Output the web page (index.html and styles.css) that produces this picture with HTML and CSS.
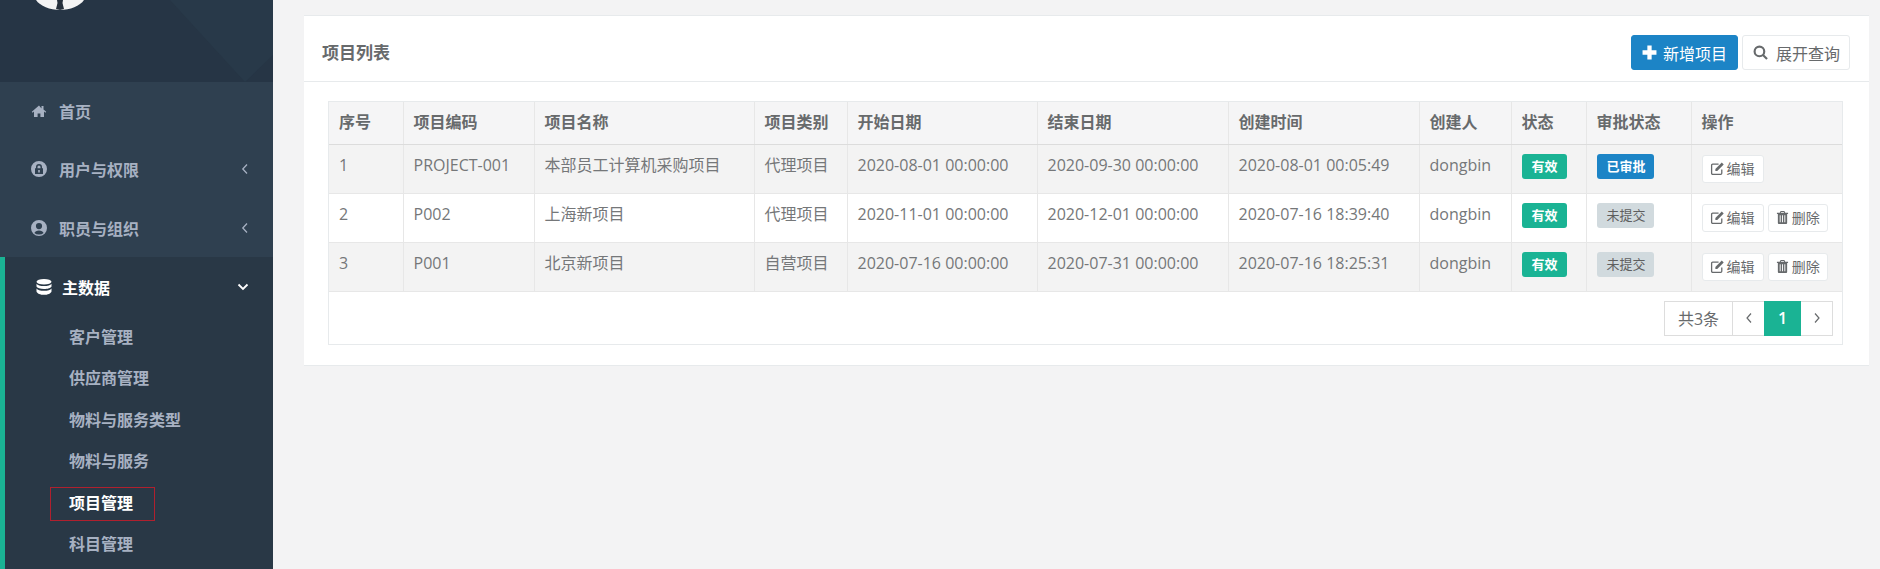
FILE: index.html
```html
<!DOCTYPE html>
<html lang="zh-CN">
<head>
    <meta charset="UTF-8" />
    <title>项目管理</title>
    <link rel="stylesheet" href="styles.css">
</head>
<body>
    <aside class="sidebar">
        <div class="side-top">
            <svg class="side-pattern" viewBox="0 0 273 82" width="273" height="82">
                <polygon points="170,0 273,0 273,55 245,82" fill="#283949"/>
            </svg>
            <svg class="avatar" viewBox="0 0 48 10" width="48" height="10">
                <path d="M0 0H48C44 6 34 10 24 10S4 6 0 0Z" fill="#f4f4f4"/>
                <path d="M21 0H27L26.5 3 28 9 24 10 20 9 21.5 3Z" fill="#26303c"/>
            </svg>
        </div>
        <ul class="menu">
            <li class="menu-item">
                <svg class="menu-icon" viewBox="0 0 16 16"><path d="M8 2.500 .8 8.800l.8.900L3 8.500V14h3.600v-3.600h2.800V14H13V8.500l1.400 1.200.8-.9-2.700-2.400V3h-2v2.600Z"/></svg>
                <span>首页</span>
            </li>
            <li class="menu-item">
                <svg class="menu-icon" viewBox="0 0 16 16"><path fill-rule="evenodd" d="M8 0a8 8 0 1 1 0 16A8 8 0 0 1 8 0Zm0 3a3 3 0 0 0-3 3v1.200H4V13h8V7.200h-1V6a3 3 0 0 0-3-3Zm0 1.500A1.500 1.500 0 0 1 9.500 6v1.200h-3V6A1.500 1.500 0 0 1 8 4.500ZM7.200 9h1.600v2.500H7.200Z"/></svg>
                <span>用户与权限</span>
                <svg class="menu-arrow" viewBox="0 0 8 12"><path d="M6 1.500 1.800 6 6 10.500"/></svg>
            </li>
            <li class="menu-item">
                <svg class="menu-icon" viewBox="0 0 16 16"><path fill-rule="evenodd" d="M8 0a8 8 0 1 1 0 16A8 8 0 0 1 8 0Zm0 3a3 3 0 1 0 0 6.200A3 3 0 0 0 8 3Zm0 7.500c-2.300 0-4 1-4.600 2.400A6.300 6.300 0 0 0 8 14.500a6.300 6.300 0 0 0 4.600-1.600C12 11.500 10.300 10.500 8 10.500Z"/></svg>
                <span>职员与组织</span>
                <svg class="menu-arrow" viewBox="0 0 8 12"><path d="M6 1.500 1.800 6 6 10.500"/></svg>
            </li>
            <li class="menu-group">
                <div class="group-title">
                    <svg class="menu-icon" viewBox="0 0 16 16"><ellipse cx="8" cy="2.800" rx="7.500" ry="2.800"/><path d="M.5 4.800c1 1.600 3.800 2.300 7.500 2.300s6.500-.7 7.500-2.300v2.800c-.6 1.600-3.800 2.500-7.500 2.500S1.100 9.200.5 7.600Z"/><path d="M.5 9.400c1 1.600 3.800 2.300 7.500 2.300s6.500-.7 7.500-2.300v3c-.6 2-3.800 3.400-7.500 3.400S1.100 14.400.5 12.400Z"/></svg>
                    <span>主数据</span>
                    <svg class="group-arrow" viewBox="0 0 12 8"><path d="M1.500 1.500 6 6l4.500-4.500"/></svg>
                </div>
                <ul class="sub-menu">
                    <li>客户管理</li>
                    <li>供应商管理</li>
                    <li>物料与服务类型</li>
                    <li>物料与服务</li>
                    <li class="active">项目管理</li>
                    <li>科目管理</li>
                </ul>
            </li>
        </ul>
    </aside>

    <main class="main">
        <section class="card">
            <div class="card-head">
                <h5>项目列表</h5>
                <div class="head-tools">
                    <button class="btn btn-primary">
                        <svg class="btn-icon" viewBox="0 0 14 14"><path d="M5 .5h4v4.500h4.500v4H9v4.500H5V9H.5V5H5Z"/></svg>新增项目
                    </button>
                    <button class="btn btn-white">
                        <svg class="btn-icon search-icon" viewBox="0 0 14 14"><circle cx="6" cy="6" r="4.500"/><path d="m9.300 9.300 3.800 3.800"/></svg>展开查询
                    </button>
                </div>
            </div>
            <div class="card-body">
                <div class="table-wrap">
                    <table class="grid">
                        <colgroup>
                            <col class="c1"><col class="c2"><col class="c3"><col class="c4"><col class="c5"><col class="c6"><col class="c7"><col class="c8"><col class="c9"><col class="c10"><col class="c11">
                        </colgroup>
                        <thead>
                            <tr>
                                <th>序号</th><th>项目编码</th><th>项目名称</th><th>项目类别</th><th>开始日期</th><th>结束日期</th><th>创建时间</th><th>创建人</th><th>状态</th><th>审批状态</th><th>操作</th>
                            </tr>
                        </thead>
                        <tbody>
                            <tr>
                                <td>1</td><td>PROJECT-001</td><td>本部员工计算机采购项目</td><td>代理项目</td><td>2020-08-01 00:00:00</td><td>2020-09-30 00:00:00</td><td>2020-08-01 00:05:49</td><td>dongbin</td>
                                <td><span class="label label-green">有效</span></td>
                                <td><span class="label label-blue">已审批</span></td>
                                <td>
                                    <button class="btn-xs"><svg class="xs-icon edit-icon" viewBox="0 0 14 14"><path class="edit-box" d="M11 8v3.500a1 1 0 0 1-1 1H2.500a1 1 0 0 1-1-1V4a1 1 0 0 1 1-1H8"/><path d="M5 7.500 11 1.500l1.800 1.800-6 6H5Z"/></svg>编辑</button>
                                </td>
                            </tr>
                            <tr>
                                <td>2</td><td>P002</td><td>上海新项目</td><td>代理项目</td><td>2020-11-01 00:00:00</td><td>2020-12-01 00:00:00</td><td>2020-07-16 18:39:40</td><td>dongbin</td>
                                <td><span class="label label-green">有效</span></td>
                                <td><span class="label label-gray">未提交</span></td>
                                <td>
                                    <button class="btn-xs"><svg class="xs-icon edit-icon" viewBox="0 0 14 14"><path class="edit-box" d="M11 8v3.500a1 1 0 0 1-1 1H2.500a1 1 0 0 1-1-1V4a1 1 0 0 1 1-1H8"/><path d="M5 7.500 11 1.500l1.800 1.800-6 6H5Z"/></svg>编辑</button>
                                    <button class="btn-xs"><svg class="xs-icon" viewBox="0 0 14 14"><path fill-rule="evenodd" d="M5 0h4l1 2h3v1.200h-1V13a1 1 0 0 1-1 1H3a1 1 0 0 1-1-1V3.200H1V2h3Zm.600 1-.4 1h3.600l-.4-1ZM4 4.500V12h1V4.500Zm2.500 0V12h1V4.500Zm2.500 0V12h1V4.500Z"/></svg>删除</button>
                                </td>
                            </tr>
                            <tr>
                                <td>3</td><td>P001</td><td>北京新项目</td><td>自营项目</td><td>2020-07-16 00:00:00</td><td>2020-07-31 00:00:00</td><td>2020-07-16 18:25:31</td><td>dongbin</td>
                                <td><span class="label label-green">有效</span></td>
                                <td><span class="label label-gray">未提交</span></td>
                                <td>
                                    <button class="btn-xs"><svg class="xs-icon edit-icon" viewBox="0 0 14 14"><path class="edit-box" d="M11 8v3.500a1 1 0 0 1-1 1H2.500a1 1 0 0 1-1-1V4a1 1 0 0 1 1-1H8"/><path d="M5 7.500 11 1.500l1.800 1.800-6 6H5Z"/></svg>编辑</button>
                                    <button class="btn-xs"><svg class="xs-icon" viewBox="0 0 14 14"><path fill-rule="evenodd" d="M5 0h4l1 2h3v1.200h-1V13a1 1 0 0 1-1 1H3a1 1 0 0 1-1-1V3.200H1V2h3Zm.600 1-.4 1h3.600l-.4-1ZM4 4.500V12h1V4.500Zm2.500 0V12h1V4.500Zm2.500 0V12h1V4.500Z"/></svg>删除</button>
                                </td>
                            </tr>
                        </tbody>
                    </table>
                    <div class="table-foot">
                        <div class="pager">
                            <span class="page-cell page-total">共3条</span>
                            <span class="page-cell page-arrow"><svg viewBox="0 0 8 12"><path d="M6 1.500 2 6l4 4.500"/></svg></span>
                            <span class="page-cell page-current">1</span>
                            <span class="page-cell page-arrow"><svg viewBox="0 0 8 12"><path d="M2 1.500 6 6l-4 4.500"/></svg></span>
                        </div>
                    </div>
                </div>
            </div>
        </section>
    </main>
</body>
</html>
```

FILE: styles.css
```css
* {
    box-sizing: border-box;
}

html, body {
    height: 100%;
}

body {
    margin: 0;
    display: flex;
    overflow: hidden;
    background-color: #f3f3f4;
    color: #676a6c;
    font-family: "Open Sans", "Noto Sans CJK SC", sans-serif;
    font-size: 16px;
}

ul {
    list-style: none;
    margin: 0;
    padding: 0;
}

/* sidebar */
.sidebar {
    width: 273px;
    flex-shrink: 0;
    height: 569px;
    overflow: hidden;
    background-color: #2f4050;
}

.side-top {
    position: relative;
    height: 82px;
    background-color: #263545;
}

.side-pattern {
    position: absolute;
    top: 0;
    left: 0;
}

.avatar {
    position: absolute;
    top: 0;
    left: 36px;
}

.menu-item {
    height: 58.3px;
    padding: 0 31px;
    display: flex;
    align-items: center;
    color: #a7b1c2;
    font-weight: 600;
    font-size: 16px;
}

.menu-icon {
    width: 16px;
    height: 16px;
    margin-right: 12px;
    fill: #a7b1c2;
    flex-shrink: 0;
}

.menu-arrow {
    width: 8px;
    height: 12px;
    margin-left: auto;
    margin-right: -7px;
    fill: none;
    stroke: #a7b1c2;
    stroke-width: 1.3;
}

.menu-group {
    border-left: 5px solid #1ab394;
    background-color: #293846;
}

.group-title {
    height: 60px;
    padding: 0 24px 0 31px;
    display: flex;
    align-items: center;
    color: #fff;
    font-weight: 600;
    font-size: 16px;
}

.group-title .menu-icon {
    fill: #fff;
    margin-right: 10px;
}

.group-arrow {
    width: 12px;
    height: 8px;
    margin-left: auto;
    fill: none;
    stroke: #fff;
    stroke-width: 1.8;
}

.sub-menu {
    padding: 0 0 12px 64px;
}

.sub-menu li {
    height: 41.5px;
    line-height: 41.5px;
    color: #a7b1c2;
    font-size: 16px;
    font-weight: 600;
}

.sub-menu .active {
    position: relative;
    color: #fff;
}

.sub-menu .active::after {
    content: "";
    position: absolute;
    top: 4px;
    left: -19px;
    width: 103px;
    height: 32px;
    border: 1px solid #b0202e;
}

/* main */
.main {
    flex: 1;
    padding: 15px 11px 0 31px;
    min-width: 0;
}

.card {
    background-color: #fff;
    border-top: 1px solid #e7eaec;
    border-bottom: 1px solid #e7eaec;
    height: 351px;
}

.card-head {
    height: 66px;
    padding: 19px 19px 0 18px;
    border-bottom: 1px solid #e7eaec;
    display: flex;
    justify-content: space-between;
}

.card-head h5 {
    margin: 0;
    font-size: 17px;
    line-height: 35px;
    font-weight: 600;
    color: #676a6c;
}

.head-tools {
    display: flex;
    gap: 4px;
    height: 35px;
}

.btn {
    height: 35px;
    padding: 0 10px;
    font: inherit;
    font-size: 16px;
    border-radius: 3px;
    display: flex;
    align-items: center;
    white-space: nowrap;
}

.btn-primary {
    width: 107px;
    background-color: #1c84c6;
    border: 1px solid #1c84c6;
    color: #fff;
}

.btn-white {
    width: 108px;
    background-color: #fff;
    border: 1px solid #e7eaec;
    color: #676a6c;
}

.btn-icon {
    width: 15px;
    height: 15px;
    margin-right: 6px;
    fill: #fff;
    flex-shrink: 0;
}

.search-icon {
    fill: none;
    stroke: #676a6c;
    stroke-width: 2;
    margin-right: 8px;
}

.card-body {
    padding: 19px 26px 0 24px;
}

.table-wrap {
    border: 1px solid #e7eaec;
    height: 244px;
}

.grid {
    width: 100%;
    border-collapse: collapse;
    table-layout: fixed;
}

.c1 { width: 74px; }
.c2 { width: 131px; }
.c3 { width: 220px; }
.c4 { width: 93px; }
.c5 { width: 190px; }
.c6 { width: 191px; }
.c7 { width: 191px; }
.c8 { width: 92px; }
.c9 { width: 75px; }
.c10 { width: 105px; }

.grid th, .grid td {
    padding: 0 10px;
    text-align: left;
    border-left: 1px solid #e7e7e7;
    white-space: nowrap;
}

.grid th:first-child, .grid td:first-child {
    border-left: none;
}

.grid th {
    height: 42px;
    padding-bottom: 3px;
    background-color: #f5f5f6;
    border-bottom: 1px solid #dcdcdc;
    font-weight: 600;
    font-size: 16px;
}

.grid td {
    height: 49px;
    padding-top: 7px;
    padding-bottom: 8px;
    vertical-align: top;
    line-height: 26px;
    border-bottom: 1px solid #e7e7e7;
    color: #757779;
}

.grid tbody tr:nth-child(odd) td {
    background-color: #f3f3f3;
}

.label {
    display: inline-block;
    height: 25px;
    line-height: 24px;
    margin-top: 2px;
    padding: 0 10px;
    border-radius: 3px;
    font-size: 13px;
    font-weight: 600;
    vertical-align: top;
}

.label-green {
    background-color: #1ab394;
    color: #fff;
    width: 45px;
}

.label-blue {
    background-color: #1c84c6;
    color: #fff;
    width: 57px;
}

.label-gray {
    background-color: #d1dade;
    color: #5e5e5e;
    width: 57px;
    font-weight: 400;
}

.btn-xs {
    height: 28px;
    width: 62px;
    margin: 3px 0 0;
    padding: 0 7px;
    background-color: #fff;
    border: 1px solid #e7eaec;
    border-radius: 3px;
    color: #676a6c;
    font: inherit;
    font-size: 14px;
    display: inline-flex;
    align-items: center;
    vertical-align: top;
}

.btn-xs + .btn-xs {
    width: 60px;
}

.xs-icon {
    width: 13px;
    height: 13px;
    margin-right: 3px;
    fill: #676a6c;
    flex-shrink: 0;
}

.edit-icon {
    width: 15px;
    height: 15px;
    margin-right: 2px;
}

.edit-box {
    fill: none;
    stroke: #676a6c;
    stroke-width: 1.2;
}

.table-foot {
    display: flex;
    justify-content: flex-end;
    padding: 9px 9px 0 0;
}

.pager {
    display: flex;
    height: 35px;
    border: 1px solid #ddd;
}

.page-cell {
    display: flex;
    align-items: center;
    justify-content: center;
}

.page-total {
    width: 68px;
    border-right: 1px solid #ddd;
}

.page-arrow {
    width: 31px;
}

.page-arrow svg {
    width: 8px;
    height: 12px;
    fill: none;
    stroke: #676a6c;
    stroke-width: 1.2;
}

.page-current {
    width: 37px;
    margin: -1px 0;
    background-color: #1ab394;
    color: #fff;
    font-weight: 600;
}
```
